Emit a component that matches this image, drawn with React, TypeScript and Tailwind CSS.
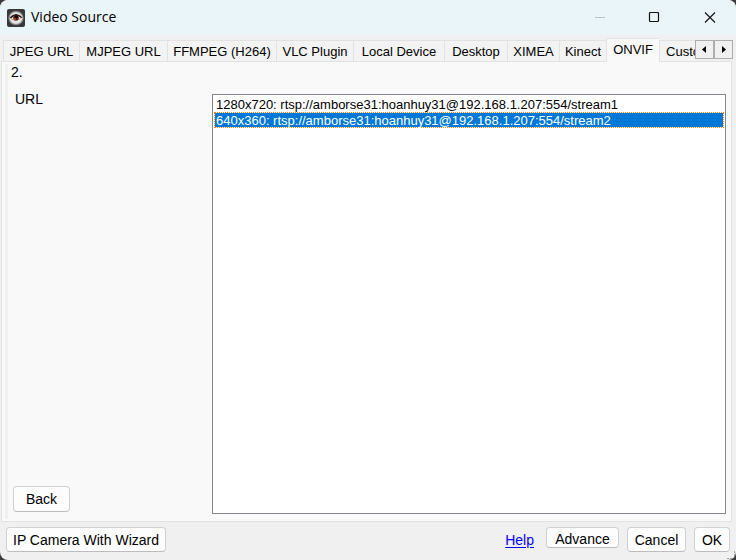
import { useState } from "react";

const tabs = [
  { label: "JPEG URL", width: "w-[76px]" },
  { label: "MJPEG URL", width: "w-[88px]" },
  { label: "FFMPEG (H264)", width: "w-[109px]" },
  { label: "VLC Plugin", width: "w-[77px]" },
  { label: "Local Device", width: "w-[91px]" },
  { label: "Desktop", width: "w-[63px]" },
  { label: "XIMEA", width: "w-[52px]" },
  { label: "Kinect", width: "w-[47px]" },
  { label: "ONVIF", width: "w-[53px]" },
  { label: "Custom", width: "w-[58px]" },
];

const streams = [
  "1280x720: rtsp://amborse31:hoanhuy31@192.168.1.207:554/stream1",
  "640x360: rtsp://amborse31:hoanhuy31@192.168.1.207:554/stream2",
];

const buttonClass =
  "rounded-[4px] border border-[#d0d0d0] border-b-[#bdbdbd] bg-[#fdfdfd] px-[6px] text-[14px] leading-[16px] whitespace-nowrap";

function EyeIcon() {
  return (
    <svg width="18" height="18" viewBox="0 0 18 18" aria-hidden="true">
      <defs>
        <radialGradient id="eyeGlow">
          <stop offset="0" stopColor="#fff" />
          <stop offset="0.7" stopColor="#e2e2e2" />
          <stop offset="1" stopColor="#4a4a4a" />
        </radialGradient>
      </defs>
      <rect width="18" height="18" rx="2" fill="#383838" />
      <ellipse cx="9" cy="9" rx="8" ry="7.5" fill="url(#eyeGlow)" />
      <path d="M2.5 8.5Q6 4.5 9.5 5Q13 5.5 15.5 8.5L14 9Q12 7 9 7Q6 7 4 9.5Z" fill="#2a2020" />
      <path d="M4 9.5Q8 13 13.5 9.5" fill="none" stroke="#8a8080" strokeWidth="0.6" />
      <circle cx="9" cy="9" r="2.8" fill="#6a2410" />
      <circle cx="9.2" cy="8" r="1.8" fill="#120a0a" />
      <circle cx="8" cy="10" r="1" fill="#c24a20" />
    </svg>
  );
}

function TitleBar() {
  return (
    <header className="flex h-[35px] shrink-0 items-center bg-[#eaf5f9] pl-[7px]">
      <EyeIcon />
      <h1 className="ml-[6px] flex-1 pb-[2px] font-['Open_Sans',sans-serif] text-[14px] leading-[20px]">
        Video Source
      </h1>
      <button aria-label="Minimize" disabled className="flex h-full w-[48px] items-center justify-center">
        <svg width="12" height="12" viewBox="0 0 12 12">
          <path d="M1 5.5H11" stroke="#b9c2c5" />
        </svg>
      </button>
      <button aria-label="Maximize" className="flex h-full w-[60px] items-center justify-center">
        <svg width="12" height="12" viewBox="0 0 12 12">
          <rect x="1.5" y="0.5" width="9" height="9" rx="1" fill="none" stroke="#111" strokeWidth="1.2" />
        </svg>
      </button>
      <button aria-label="Close" className="flex h-full w-[52px] items-center justify-center">
        <svg width="12" height="12" viewBox="0 0 12 12">
          <path d="M1 0.5L11 10.5M11 0.5L1 10.5" stroke="#111" strokeWidth="1.1" />
        </svg>
      </button>
    </header>
  );
}

function ScrollButton({ label, path }: { label: string; path: string }) {
  return (
    <button
      aria-label={label}
      className="flex h-[19px] w-[19px] items-center justify-center border border-[#adadad] bg-[#f0f0f0]"
    >
      <svg width="7" height="7" viewBox="0 0 7 7">
        <path d={path} fill="#000" />
      </svg>
    </button>
  );
}

export default function App() {
  const [tab, setTab] = useState("ONVIF");
  const [selected, setSelected] = useState(1);

  return (
    <div className="h-screen bg-[#3c3c3c]">
      <div className="flex h-full flex-col overflow-hidden rounded-[8px] bg-[#f0f0f0] font-['Liberation_Sans',Arial,sans-serif] text-[14px] text-black">
        <TitleBar />

        <div className="flex h-[26px] shrink-0 items-end pr-[3px] pl-[3px]">
          <div role="tablist" className="z-10 -mb-px flex min-w-0 flex-1 items-end overflow-hidden">
            {tabs.map(({ label, width }) => (
              <button
                key={label}
                role="tab"
                aria-selected={tab === label}
                onClick={() => setTab(label)}
                className={`shrink-0 border-t border-l border-[#e2e2e2] text-center text-[13px] whitespace-nowrap ${width} ${
                  tab === label
                    ? "h-[24px] bg-[#f9f9f9] pb-[2px] leading-[20px]"
                    : "h-[22px] border-b bg-[#f3f3f3] pt-[2px] leading-[18px]"
                }`}
              >
                {label}
              </button>
            ))}
          </div>
          <div className="mb-[2px] flex">
            <ScrollButton label="Scroll tabs left" path="M5 0V7L1 3.5Z" />
            <ScrollButton label="Scroll tabs right" path="M2 0V7L6 3.5Z" />
          </div>
        </div>

        <main className="mr-[4px] ml-px flex min-h-0 flex-1 border border-[#e2e2e2] bg-[#f9f9f9] py-[2px] pr-[5px] pl-[3px]">
          <section className="flex w-[207px] shrink-0 flex-col items-start border-l-[3px] border-[#f0f0f0] pb-[7px] pl-[3px] leading-[16px]">
            <p>2.</p>
            <p id="url-label" className="mt-[11px] ml-[4px]">
              URL
            </p>
            <button className={`${buttonClass} mt-auto ml-[2px] h-[26px] w-[57px]`}>Back</button>
          </section>
          <ul
            role="listbox"
            aria-labelledby="url-label"
            className="mt-[30px] mb-[5px] min-w-0 flex-1 border border-[#828790] bg-white p-px text-[13px] leading-[16px]"
          >
            {streams.map((stream, index) => (
              <li
                key={stream}
                role="option"
                aria-selected={selected === index}
                onClick={() => setSelected(index)}
                className={`h-[16px] border px-px whitespace-nowrap ${
                  selected === index
                    ? "border-dotted border-[#ff8728] bg-[#0078d7] bg-clip-padding text-white"
                    : "border-transparent"
                }`}
              >
                {stream}
              </li>
            ))}
          </ul>
        </main>

        <footer className="relative flex h-[38px] shrink-0 items-start pt-[5px] pr-[6px] pl-[6px]">
          <button className={`${buttonClass} h-[25px]`}>IP Camera With Wizard</button>
          <a href="#help" className="mt-[5px] mr-[12px] ml-auto leading-[16px] text-[#0000ff] underline underline-offset-2">
            Help
          </a>
          <button className={`${buttonClass} mr-[8px] h-[21px] w-[73px] pt-[2px]`}>Advance</button>
          <button className={`${buttonClass} mr-[8px] h-[25px] w-[59px]`}>Cancel</button>
          <button className={`${buttonClass} h-[25px] w-[36px]`}>OK</button>
          <svg className="absolute right-0 bottom-0" width="10" height="10" viewBox="0 0 10 10" aria-hidden="true">
            <path d="M1 8.5H8M8.5 1V8" stroke="#a0a0a0" strokeDasharray="2 1" />
          </svg>
        </footer>
      </div>
    </div>
  );
}
